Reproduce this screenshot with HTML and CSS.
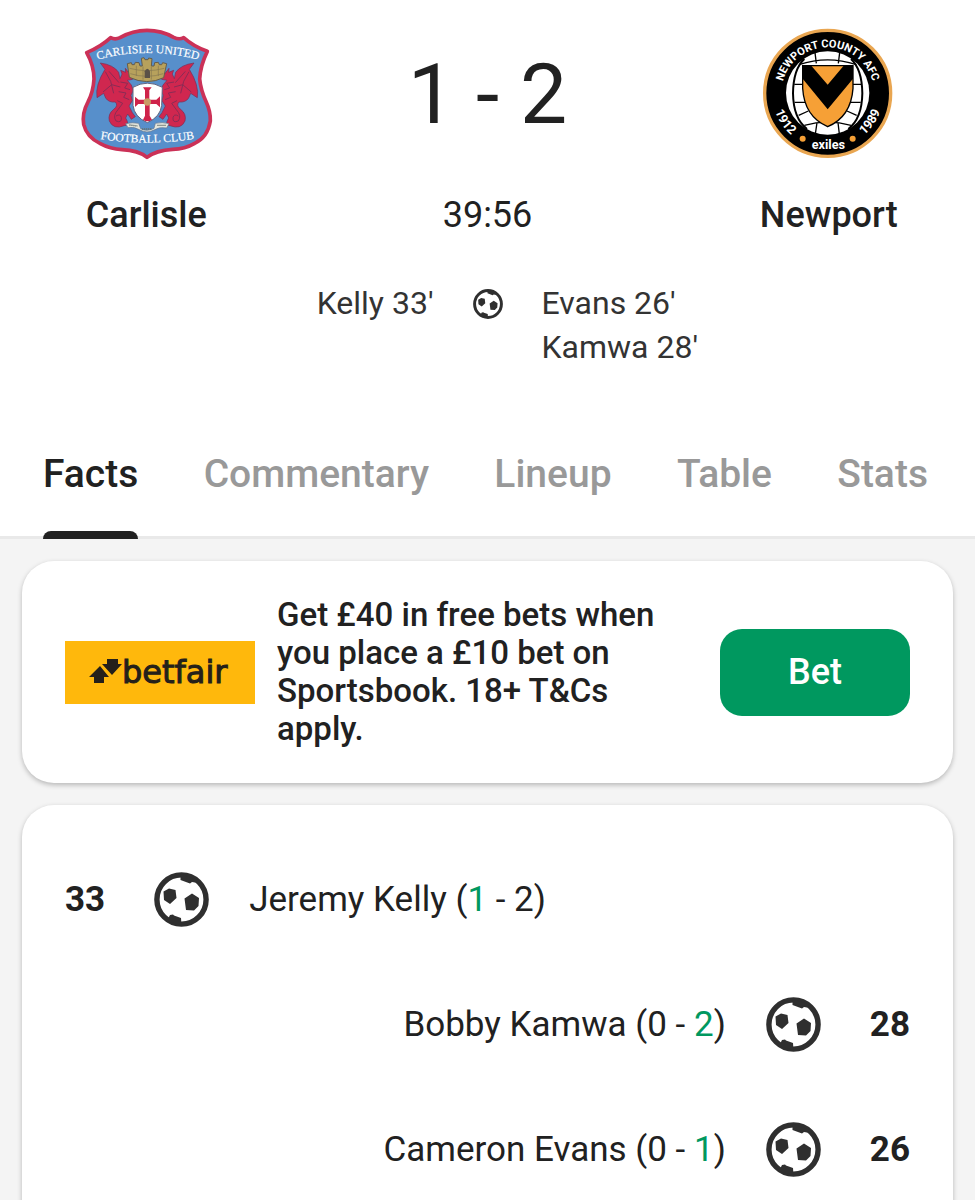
FILE: index.html
```
<!DOCTYPE html>
<html lang="en">
<head>
  <meta charset="utf-8">
  <meta name="viewport" content="width=device-width, initial-scale=1">
  <title>Carlisle 1 - 2 Newport</title>
  <link rel="stylesheet" href="styles.css">
</head>
<body>

<!-- shared shapes -->
<svg class="defs" aria-hidden="true">
  <symbol id="ball" viewBox="0 0 55 55">
    <circle cx="27.500" cy="27.500" r="24.600" fill="none" stroke="#2f2f2f" stroke-width="5.400"/>
    <path d="M26.500 2V8L36 11.500L38 10L41 10.500L45 8ZM12 49L15 45L16 43L19 42.500L20 43.500L27 46L27.500 53Z"/>
    <path d="M9.500 19.500L15 16.500L21.500 18L22.500 26L16 32L10 28ZM30.500 26.500L38 21.500L45 26L44.500 34L40 38.500L32 38Z"/>
  </symbol>
</svg>

<header id="score">
  <div class="team">
    <svg class="crest" viewBox="0 0 450 450" role="img" aria-label="Carlisle United Football Club">
      <path d="M47 98Q90 80 119 53Q132 60 147 53Q185 31 228 31Q272 31 308 52Q325 60 338 53Q368 80 409 94Q388 137 386 177Q389 210 406 247Q419 275 418 303Q410 352 371 370Q342 387 305 388Q255 391 228 412Q202 391 153 389Q117 387 88 371Q47 351 38 313Q33 279 50 248Q67 215 69 177Q69 137 47 98Z" fill="#578fcb" stroke="#cb3157" stroke-width="11" stroke-linejoin="round"/>
      <g id="dragon">
        <path d="M102 148L88 129Q127 134 143 157L147 176L153 162L149 151L164 157L163 145L174 159Q186 170 185 178L169 181L181 195L187 211L180 226L184 242L174 258L184 278L193 290L181 298L170 282L164 294Q178 317 160 317Q127 330 115 303Q110 282 128 268Q143 257 133 246Q113 248 104 234L98 220L78 233Q72 196 102 148Z" fill="#d0274f" stroke="#792e54" stroke-width="2"/>
        <path d="M103 155L119 184L128 220M114 154L144 188M96 216L122 194L148 201M148 186L170 190L161 204L177 209M143 215L165 219L158 232L175 239M139 242L155 250L141 269Q124 287 135 303Q153 310 151 293Q148 280 135 288" fill="none" stroke="#8a2c55" stroke-width="3"/>
      </g>
      <use href="#dragon" transform="matrix(-1 0 0 1 457 0)"/>
      <path d="M175 172L169 131L181 128L183 134L190 134L193 127L204 128L207 138L214 138L211 115L219 113L222 119L231 119L233 114L243 116L241 138L249 138L251 128L262 127L265 134L272 134L275 128L287 131L278 173Q228 197 175 172Z" fill="#b7a15c" stroke="#655c4b" stroke-width="3"/>
      <path d="M176 145Q228 159 280 145M178 161Q228 177 277 161M196 137V168M216 140V179M241 140V179M262 137V168" fill="none" stroke="#857750" stroke-width="2"/>
      <path d="M221 154q8-16 16 0v20h-16z" fill="#5a5147"/>
      <path d="M186 202Q229 177 274 202L272 256Q268 291 229 308Q190 291 186 256Z" fill="#fff" stroke="#62647f" stroke-width="3"/>
      <path d="M216 202H242L235 211V239H256L267 229V262L256 252H236V287L243 299Q230 309 216 299L222 287V252H202L192 261V230L203 239H222V211Z" fill="#cf234a"/>
      <circle cx="229" cy="246" r="11" fill="#c99a65"/>
      <path d="M164 311Q184 306 203 310L209 326Q228 336 249 325L253 310Q274 305 294 311L287 324Q265 319 247 331Q228 341 207 330Q190 319 171 323Z" fill="#e3e5dc" stroke="#647590" stroke-width="2"/>
      <path d="M175 315l25 3M213 327l28 0M259 316l26 0" stroke="#65716f" stroke-width="4" stroke-dasharray="4 2"/>
      <path id="carlisle-top" d="M62 124Q230 74 400 124" fill="none"/>
      <path id="carlisle-bottom" d="M72 354Q228 382 386 354" fill="none"/>
      <text class="crest-serif"><textPath href="#carlisle-top" startOffset="50%">CARLISLE UNITED</textPath></text>
      <text class="crest-serif"><textPath href="#carlisle-bottom" startOffset="50%">FOOTBALL CLUB</textPath></text>
    </svg>
    <h2>Carlisle</h2>
  </div>

  <div class="result">
    <h1>1 - 2</h1>
    <time>39:56</time>
  </div>

  <div class="team">
    <svg class="crest" viewBox="0 0 450 450" role="img" aria-label="Newport County AFC">
      <circle cx="221" cy="220" r="189" fill="#000" stroke="#e9a651" stroke-width="10"/>
      <circle cx="221" cy="219" r="125" fill="#fff"/>
      <path d="M151 117Q118 147 117 220Q118 296 159 327M291 117Q324 147 325 220Q324 296 283 327" fill="none" stroke="#000" stroke-width="6"/>
      <path d="M135 134Q221 105 307 134M183 98L187 130M257 98L253 130M121 193H150M321 193H292M122 247H153M320 247H289M134 286L163 273M308 286L279 273M151 316Q221 297 291 316M184 342L189 308M256 342L252 308" fill="none" stroke="#000" stroke-width="4"/>
      <path d="M146 137H297V205Q291 290 221 320Q151 290 146 205Z" fill="#f6a036" stroke="#000" stroke-width="4"/>
      <path d="M146 137H172L221 194L269 137H297V176L221 268L146 176Z"/>
      <path id="newport-top" d="M82 239A139 137 0 0 1 360 239" fill="none" transform="translate(0 -20)"/>
      <path id="newport-bottom" d="M54 219A167 167 0 0 0 388 219" fill="none"/>
      <text class="crest-sans"><textPath href="#newport-top" startOffset="50%">NEWPORT COUNTY AFC</textPath></text>
      <text class="crest-sans crest-years"><textPath href="#newport-bottom" startOffset="19%">1912</textPath></text>
      <text class="crest-sans crest-years"><textPath href="#newport-bottom" startOffset="81%">1989</textPath></text>
      <text class="crest-sans crest-years" x="223" y="387">exiles</text>
      <circle cx="146" cy="356" r="9" fill="#f6a036"/>
      <circle cx="296" cy="356" r="9" fill="#f6a036"/>
    </svg>
    <h2>Newport</h2>
  </div>
</header>

<section id="scorers">
  <ul class="home">
    <li>Kelly 33'</li>
  </ul>
  <svg class="ball" role="img" aria-label="Goals"><use href="#ball"/></svg>
  <ul class="away">
    <li>Evans 26'</li>
    <li>Kamwa 28'</li>
  </ul>
</section>

<nav id="tabs">
  <a href="#facts" class="active">Facts</a>
  <a href="#commentary">Commentary</a>
  <a href="#lineup">Lineup</a>
  <a href="#table">Table</a>
  <a href="#stats">Stats</a>
</nav>

<main id="facts">
  <section class="card promo">
    <svg class="betfair" viewBox="0 0 190 63" role="img" aria-label="betfair">
      <rect width="190" height="63" fill="#ffb80c"/>
      <path d="M24 36L35 25L44 36H39V42H29V36ZM42 18H53V23H57L47 34L37 23H42Z" fill="#24201a"/>
      <text x="57" y="42">betfair</text>
    </svg>
    <p>Get £40 in free bets when you place a £10 bet on Sportsbook. 18+ T&amp;Cs apply.</p>
    <button type="button">Bet</button>
  </section>

  <ul class="card events">
    <li class="home">
      <b>33</b>
      <svg class="ball" role="img" aria-label="Goal"><use href="#ball"/></svg>
      <span>Jeremy Kelly (<em>1</em> - 2)</span>
    </li>
    <li class="away">
      <b>28</b>
      <svg class="ball" role="img" aria-label="Goal"><use href="#ball"/></svg>
      <span>Bobby Kamwa (0 - <em>2</em>)</span>
    </li>
    <li class="away">
      <b>26</b>
      <svg class="ball" role="img" aria-label="Goal"><use href="#ball"/></svg>
      <span>Cameron Evans (0 - <em>1</em>)</span>
    </li>
  </ul>
</main>

</body>
</html>
```

FILE: styles.css
```
* { box-sizing: border-box; }
body {
  display: flex;
  flex-direction: column;
  height: 100vh;
  margin: 0;
  background: #fff;
  color: #212121;
  font-family: Roboto, "Liberation Sans", sans-serif;
}
h1, h2, p, ul { margin: 0; padding: 0; font-weight: 400; }
ul { list-style: none; }
.defs { position: absolute; width: 0; height: 0; }
.ball { flex: none; fill: #2f2f2f; }

/* score */
#score {
  display: grid;
  grid-template-columns: 3fr 4fr 3fr;
  padding-top: 20px;
  text-align: center;
}
.team, .result {
  display: flex;
  flex-direction: column;
  align-items: center;
}
.crest { width: 150px; height: 150px; }
.crest-serif {
  fill: #fff;
  stroke: #fff;
  stroke-width: 0.5px;
  font: 35px "Liberation Serif", serif;
  text-anchor: middle;
}
.crest-sans {
  fill: #fff;
  font: 700 33px Roboto, sans-serif;
  text-anchor: middle;
}
.crest-years { font-size: 38px; }
.team h2 {
  margin-top: 21px;
  font-size: 36px;
  font-weight: 500;
  line-height: 48px;
}
.result h1 {
  font-size: 84px;
  line-height: 150px;
}
.result time {
  margin-top: 21px;
  font-size: 36px;
  line-height: 48px;
}

/* scorers */
#scorers {
  display: grid;
  grid-template-columns: 1fr 30px 1fr;
  column-gap: 39px;
  padding: 42px 44px 40px;
  color: #333;
  font-size: 32px;
  line-height: 44px;
}
#scorers .home { text-align: right; }
#scorers .ball { width: 30px; height: 30px; margin-top: 8px; }

/* tabs */
#tabs {
  display: flex;
  justify-content: space-between;
  padding: 4px 47px 0 43px;
  border-bottom: 3px solid #e9e9e9;
}
#tabs a {
  position: relative;
  color: #999;
  font-size: 39px;
  font-weight: 500;
  line-height: 123px;
  text-decoration: none;
}
#tabs a.active { color: #212121; }
#tabs a.active:after {
  content: "";
  position: absolute;
  left: 0;
  right: 0;
  bottom: -3px;
  height: 8px;
  border-radius: 8px 8px 0 0;
  background: #212121;
}

/* cards */
#facts {
  flex: 1;
  min-height: 0;
  overflow: hidden;
  padding: 22px 22px 0;
  background: #f4f4f4;
}
.card {
  border-radius: 32px;
  background: #fff;
  box-shadow: 0 2px 5px rgba(0, 0, 0, 0.25);
}
.promo {
  display: flex;
  align-items: center;
  padding: 35px 43px;
}
.betfair { flex: none; width: 190px; height: 63px; }
.betfair text {
  fill: #24201a;
  stroke: #24201a;
  stroke-width: 1px;
  font: 32px "DejaVu Sans", sans-serif;
}
.promo p {
  flex: 1;
  margin: 0 44px 0 22px;
  font-size: 33px;
  font-weight: 500;
  line-height: 38px;
}
.promo button {
  width: 190px;
  height: 87px;
  border: 0;
  border-radius: 22px;
  background: #00985f;
  color: #fff;
  font: 500 36px Roboto, sans-serif;
}

/* match events */
.events {
  margin-top: 22px;
  padding: 32px 43px;
}
.events li {
  display: flex;
  align-items: center;
  height: 125px;
  font-size: 35px;
}
.events .away { flex-direction: row-reverse; }
.events .ball {
  width: 55px;
  height: 55px;
  margin: 0 40px 0 49px;
}
.events .away .ball { margin: 0 49px 0 40px; }
.events b { font-weight: 700; }
.events em { color: #00985f; font-style: normal; }
```
